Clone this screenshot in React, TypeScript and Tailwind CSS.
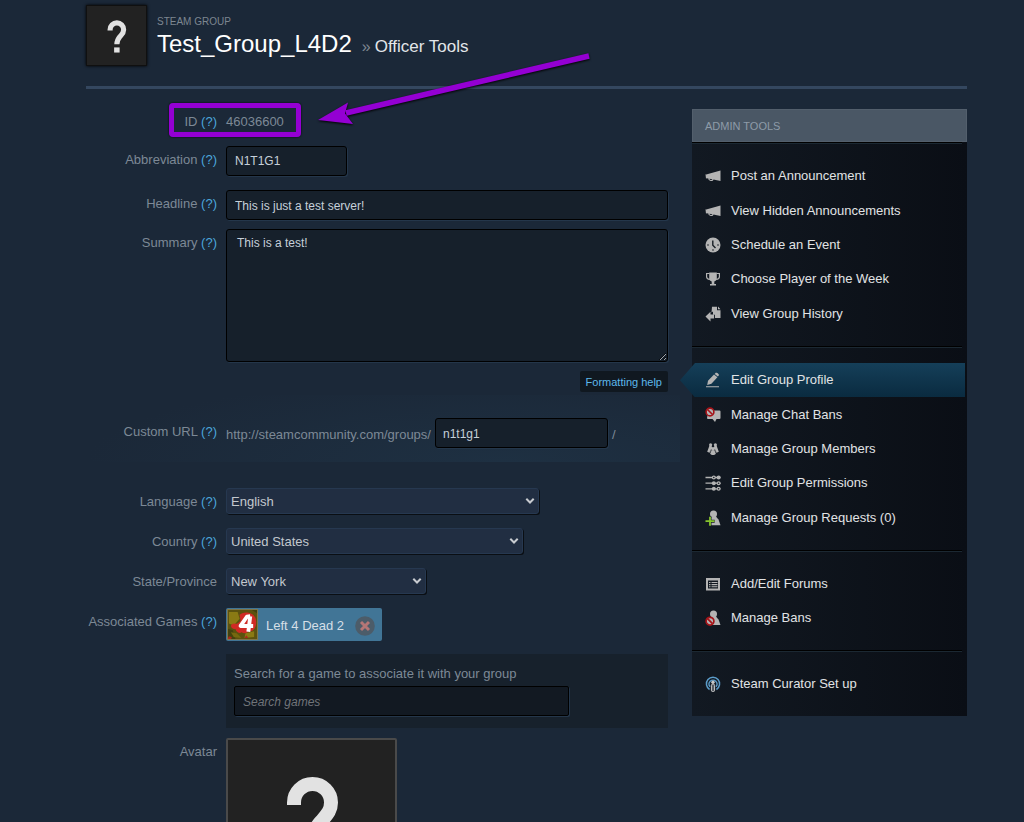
import type { ReactNode } from "react";

interface FieldProps {
    label: string;
    htmlFor?: string;
    help?: boolean;
    className?: string;
    children: ReactNode;
}

interface SelectProps {
    id: string;
    value: string;
    width: string;
}

interface AdminItem {
    label: string;
    icon: ReactNode;
    active?: boolean;
}

const inputStyle =
    "block rounded-[3px] border border-black bg-[#16202b] text-[12px] text-[#c6d0da] shadow-[1px_1px_0_#24364a] outline-none";

const HelpLink = () => (
    <a href="#help" className="text-[#4ba6dc]">(?)</a>
);

// One form row: right-aligned label, then the control
const Field = ({ label, htmlFor, help = true, className = "", children }: FieldProps) => (
    <div className={`grid grid-cols-[131px_minmax(0,1fr)] gap-x-[9px] ${className}`}>
        <div className="pt-[5px] text-right whitespace-nowrap">
            {htmlFor ? <label htmlFor={htmlFor}>{label}</label> : <span>{label}</span>}
            {help && <> <HelpLink /></>}
        </div>
        <div>{children}</div>
    </div>
);

const SelectBox = ({ id, value, width }: SelectProps) => (
    <div className={`relative ${width}`}>
        <select
            id={id}
            defaultValue={value}
            className="block h-[26px] w-full appearance-none rounded-[3px] border border-[#263850] bg-[#212e42] pt-px pl-1 text-[13px] text-[#c3c8ce] shadow-[1px_1px_0_#0a0e13] outline-none"
        >
            <option>{value}</option>
        </select>
        <svg viewBox="0 0 10 8" className="pointer-events-none absolute top-[9px] right-1 h-2 w-[10px]">
            <path d="M1.3 1.8 5 5.5 8.7 1.8" fill="none" stroke="#c8cbd0" strokeWidth="2" />
        </svg>
    </div>
);

// Default group avatar
const QuestionMark = ({ viewBox, className }: { viewBox: string; className: string }) => (
    <svg viewBox={viewBox} className={className}>
        <path
            d="M68 67v-2.5a18.5 18.5 0 0 1 37 0c0 9-5 13-10 19s-8.5 10-8.5 21"
            fill="none"
            stroke="#e2e2e2"
            strokeWidth="14"
        />
        <rect x="79" y="113" width="15" height="14" fill="#e2e2e2" />
    </svg>
);

const Icon = ({ children }: { children: ReactNode }) => (
    <svg viewBox="0 0 16 16" className="h-4 w-4 shrink-0" fill="#b4b4b4">
        {children}
    </svg>
);

const megaphone = (
    <Icon>
        <path d="M15.5 2.5v10.600L8.500 11.500c-.4 1.500-2 1.800-3.400 1.300-1.300-.4-1.900-1.200-1.700-2.200L1.500 10.300 1 10.800.5 6.200l.7.4zM4.500 10.800c0 .7.500 1 1.200 1.200.8.200 1.500 0 1.800-.7z" />
    </Icon>
);

const clock = (
    <Icon>
        <circle cx="8" cy="8" r="7.5" />
        <path d="M7.800 3.500v4.800l2.700 2.700" fill="none" stroke="#171d24" strokeWidth="1.4" />
        <g fill="#171d24">
            <circle cx="3" cy="8" r=".8" />
            <circle cx="13" cy="8" r=".8" />
            <circle cx="8" cy="13" r=".8" />
        </g>
    </Icon>
);

const trophy = (
    <Icon>
        <path d="M4.200 1.500h7.600v6c0 1.700-1.300 2.600-2.500 3V13H11v1.500H5V13h1.700v-2.500c-1.200-.4-2.500-1.300-2.500-3z" />
        <path d="M4.500 2.500H1.600v3.300c0 1.700 1.200 2.500 3.200 2.500M11.500 2.500h2.900v3.300c0 1.700-1.200 2.500-3.200 2.500" fill="none" stroke="#b4b4b4" strokeWidth="1.2" />
    </Icon>
);

const history = (
    <Icon>
        <path d="M7 .8h5v3.500h3.500V12H10V8.700H8V5.500L6.500 6.500zM13 .6l2.500 2.700H13z" />
        <path d="M.5 10.500 5.500 5.800v2.800h3.600v4H5.500v2.800z" />
    </Icon>
);

const pencil = (
    <Icon>
        <path d="m2.200 13 .8-4.200 6-6.400 3.400 2.800-6 6.600zM9.700 1.900l1-1.100c.9-.8 3.900 1.400 3.200 2.500l-1 1.300z" />
        <path d="M1 14.700h13" fill="none" stroke="#b4b4b4" strokeWidth="1.1" />
    </Icon>
);

const chatBan = (
    <Icon>
        <path d="M3.500 3.500h11a1 1 0 0 1 1 1v6.500a1 1 0 0 1-1 1H11.500L10 15l-2.500-3H3a1 1 0 0 1-1-1z" />
        <circle cx="5" cy="5" r="3.900" fill="#b4b4b4" stroke="#a51318" strokeWidth="1.6" />
        <path d="m2.500 2.500 5 5" stroke="#a51318" strokeWidth="1.6" />
    </Icon>
);

const members = (
    <Icon>
        <circle cx="5.600" cy="3.800" r="1.600" />
        <circle cx="10.400" cy="3.800" r="1.600" />
        <path d="M4.300 5h2.300l.8 2.500L5 12l-2.800-1.200zM11.700 5H9.400l-.8 2.500L11 12l2.800-1.200z" />
        <circle cx="8" cy="8" r="1.900" />
        <path d="M6.500 9.500h3l1.400 3.300c-1.300 1.700-4.500 1.700-5.800 0z" />
        <path d="M6.300 8.300 4.700 12M9.700 8.300l1.600 3.700" stroke="#171d24" strokeWidth=".6" />
    </Icon>
);

const permissions = (
    <Icon>
        <path d="M.5 2.500h15M.5 8.200h15M.5 13.900h15" stroke="#b4b4b4" strokeWidth="1.3" />
        <circle cx="8.800" cy="2.500" r="2" />
        <circle cx="13.600" cy="2.500" r="2" />
        <circle cx="8.800" cy="8.200" r="2" />
        <circle cx="13.600" cy="8.200" r="2" />
        <circle cx="8.800" cy="13.800" r="2" />
        <circle cx="13.600" cy="13.800" r="2" />
        <g fill="#171d24">
            <circle cx="8.800" cy="2.500" r=".8" />
            <circle cx="13.600" cy="8.200" r=".8" />
            <circle cx="13.600" cy="13.800" r=".8" />
        </g>
    </Icon>
);

const requests = (
    <Icon>
        <circle cx="8.500" cy="4" r="3.500" />
        <path d="M7 6h3.500l3 3.500 2 5.800H5V10z" />
        <path d="M5 6.500v9.400M.3 11.200h9.400" stroke="#171d24" strokeWidth="3" />
        <path d="M5 6.700v9M.5 11.200H9.500" stroke="#86c52d" strokeWidth="1.8" />
    </Icon>
);

const forums = (
    <Icon>
        <path fillRule="evenodd" d="M1 2h14v12.500H1zm2 2.600v8h10v-8z" />
        <path d="M4 6.500h1.500M4 8.600h1.500M4 10.700h1.500M6.500 6.500h6M6.500 8.600h6M6.500 10.700h6" stroke="#b4b4b4" strokeWidth="1.1" />
    </Icon>
);

const bans = (
    <Icon>
        <circle cx="8.500" cy="4" r="3.500" />
        <path d="M7 6h3.500l3 3.500 2 5.500H5V9z" />
        <circle cx="5" cy="11.200" r="3.900" fill="#b4b4b4" stroke="#a51318" strokeWidth="1.7" />
        <path d="m2.500 8.700 5 5" stroke="#a51318" strokeWidth="1.7" />
    </Icon>
);

const curator = (
    <Icon>
        <g fill="none" stroke="#5b9cc9" strokeWidth="1.5">
            <path d="M4.600 13.500a6.600 6.600 0 1 1 6.800 0" />
            <path d="M5 10.800a4 4 0 1 1 6 0" />
        </g>
        <circle cx="8" cy="6.200" r="1.700" fill="#c9c9c9" />
        <rect x="6.400" y="8.200" width="3.200" height="7.300" rx="1.200" fill="#555b62" stroke="#c9c9c9" />
    </Icon>
);

const groups: { height: string; items: AdminItem[] }[] = [
    {
        height: "h-[172px]",
        items: [
            { label: "Post an Announcement", icon: megaphone },
            { label: "View Hidden Announcements", icon: megaphone },
            { label: "Schedule an Event", icon: clock },
            { label: "Choose Player of the Week", icon: trophy },
            { label: "View Group History", icon: history },
        ],
    },
    {
        height: "h-[172px]",
        items: [
            { label: "Edit Group Profile", icon: pencil, active: true },
            { label: "Manage Chat Bans", icon: chatBan },
            { label: "Manage Group Members", icon: members },
            { label: "Edit Group Permissions", icon: permissions },
            { label: "Manage Group Requests (0)", icon: requests },
        ],
    },
    {
        height: "h-[68px]",
        items: [
            { label: "Add/Edit Forums", icon: forums },
            { label: "Manage Bans", icon: bans },
        ],
    },
    {
        height: "h-[34px]",
        items: [{ label: "Steam Curator Set up", icon: curator }],
    },
];

const AdminTools = () => (
    <nav className="w-[275px] shrink-0 bg-linear-to-r from-[#121922] to-[#0a0e15]">
        <h2 className="flex h-[33px] items-center border border-[#535f6c] bg-[#4a5765] px-3 text-[11px] text-[#8e9ba8]">
            ADMIN TOOLS
        </h2>
        {groups.map((group) => (
            <div
                key={group.items[0].label}
                className="mr-[5px] border-t border-black pt-4 pb-[15px] shadow-[inset_0_1px_0_#1b2832]"
            >
                <ul className={`grid auto-rows-fr ${group.height}`}>
                    {group.items.map((item) => (
                        <li key={item.label} className="grid">
                            <a
                                href="#tools"
                                className={
                                    item.active
                                        ? "-mr-[3px] -ml-[12px] flex items-center gap-[10px] bg-linear-to-b from-[#153f59] to-[#0a2b40] pl-[25px] text-[#e1e3e5] [clip-path:polygon(15px_0,100%_0,100%_100%,15px_100%,0_50%)]"
                                        : "flex items-center gap-[10px] pl-[13px] text-[#e1e3e5]"
                                }
                            >
                                {item.icon}
                                {item.label}
                            </a>
                        </li>
                    ))}
                </ul>
            </div>
        ))}
    </nav>
);

const GameBadge = () => (
    <div className="flex h-[33px] w-fit items-center rounded-[2px] bg-[#417596] pr-[7px] pl-px text-[#d5dfe6]">
        <svg viewBox="0 0 32 32" className="h-[31px] w-[31px]">
            <rect width="32" height="32" fill="#5c520f" />
            <path d="M2 3h9l2 7-6 7-5-2zM19 25l9-2v6l-10 1z" fill="#8a7a14" />
            <path d="M0 20l6 2 3 10H0zM24 0h8v5z" fill="#43420f" />
            <path d="M4 24l6 1 5 5-8-1z" fill="#75680f" />
            <path d="M13 6c3-4 16-4 17 6 1 7-3 12-8 11-2 3-5 2-7 1-3 2-6-1-6-3-5 0-7-5-2-6 3 1 5-1 7-3z" fill="#d02a24" />
            <path d="M2 28l3 1-1 3H0zM20 27l2 3h-4z" fill="#a82a1c" />
            <path d="M24 7.500 20.500 8 14 17.500H27M24 7.500 22 23.500" fill="none" stroke="#fff" strokeWidth="4" strokeLinejoin="round" />
            <rect x=".5" y=".5" width="31" height="31" fill="none" stroke="#80774c" />
        </svg>
        <span className="pt-[3px] pl-2">Left 4 Dead 2</span>
        <button type="button" aria-label="Remove Left 4 Dead 2" className="ml-[11px] pt-[3px]">
            <svg viewBox="0 0 20 20" className="block h-5 w-5">
                <circle cx="10" cy="10" r="9.800" fill="#4c5c69" />
                <path d="m6 6 8 8M14 6l-8 8" stroke="#b47676" strokeWidth="3" />
            </svg>
        </button>
    </div>
);

export default function App() {
    return (
        <div className="relative h-screen overflow-hidden bg-[#1b2838] pr-[57px] pl-[86px] font-['Liberation_Sans',Arial,sans-serif] text-[13px] leading-[18px] text-[#7d8996]">
            <header className="flex h-[89px] border-b-[3px] border-[#34475f] pt-[5px]">
                <div className="h-[61px] w-[61px] shrink-0 border border-[#101010] bg-[#222] shadow-[0_0_3px_#000]">
                    <QuestionMark viewBox="5 0 161 161" className="h-full w-full" />
                </div>
                <div className="pt-[11px] pl-[10px]">
                    <div className="text-[10px] leading-3 text-[#7d8690]">STEAM GROUP</div>
                    <h1 className="flex items-baseline text-[24px] leading-8 text-white">
                        <a href="#group">Test_Group_L4D2</a>
                        <span className="ml-[10px] text-[16px] text-[#7d8690]">»</span>
                        <span className="ml-1 text-[17px] text-[#e3e6e9]">Officer Tools</span>
                    </h1>
                </div>
            </header>

            <div className="flex justify-between gap-6">
                <form className="min-w-0 flex-1 pt-[14px]">
                    <Field label="ID" className="pt-[5px]">
                        <div className="relative h-[38px] pt-[5px]">
                            46036600
                            <div className="absolute top-[-5px] left-[-57px] h-[34px] w-[132px] rounded-[4px] border-[5px] border-[#9400d3] shadow-[0_0_2px_#000]" />
                        </div>
                    </Field>
                    <Field label="Abbreviation" htmlFor="abbreviation">
                        <input id="abbreviation" defaultValue="N1T1G1" className={`${inputStyle} h-[30px] w-[121px] px-2`} />
                    </Field>
                    <Field label="Headline" htmlFor="headline" className="mt-[14px]">
                        <input id="headline" defaultValue="This is just a test server!" className={`${inputStyle} h-[30px] w-full px-2 pt-px`} />
                    </Field>
                    <Field label="Summary" htmlFor="summary" className="mt-[9px]">
                        <textarea
                            id="summary"
                            defaultValue="This is a test!"
                            className={`${inputStyle} h-[133px] w-full px-[10px] py-1`}
                        />
                        <div className="mt-[9px] flex justify-end">
                            <button type="button" className="h-[21px] rounded-[2px] bg-[#101820] px-[6px] text-[11px] text-[#5eb8ec]">
                                Formatting help
                            </button>
                        </div>
                    </Field>
                    <Field
                        label="Custom URL"
                        htmlFor="custom-url"
                        className="mt-[3px] -mr-3 bg-[radial-gradient(ellipse_70%_130%_at_70%_100%,#1e3042,#1b2838)] pt-[23px] pb-[14px]"
                    >
                        <div className="flex items-center gap-[4px]">
                            <span className="pt-[3px]">http://steamcommunity.com/groups/</span>
                            <input id="custom-url" defaultValue="n1t1g1" className={`${inputStyle} h-[30px] w-[173px] px-[7px] pt-px`} />
                            <span className="pt-[3px]">/</span>
                        </div>
                    </Field>
                    <div className="mt-[26px] grid gap-[14px]">
                        <Field label="Language" htmlFor="language">
                            <SelectBox id="language" value="English" width="w-[313px]" />
                        </Field>
                        <Field label="Country" htmlFor="country">
                            <SelectBox id="country" value="United States" width="w-[297px]" />
                        </Field>
                        <Field label="State/Province" htmlFor="state" help={false}>
                            <SelectBox id="state" value="New York" width="w-[200px]" />
                        </Field>
                        <Field label="Associated Games">
                            <GameBadge />
                            <div className="mt-[13px] bg-[#17212c] px-2 pt-[11px] pb-3">
                                <label htmlFor="search-games">Search for a game to associate it with your group</label>
                                <input
                                    id="search-games"
                                    placeholder="Search games"
                                    className="mt-[3px] block h-[30px] w-[335px] rounded-[2px] border border-black bg-[#121922] px-2 pt-px text-[12px] italic shadow-[1px_1px_0_#24364a] outline-none placeholder:text-[#707479]"
                                />
                            </div>
                        </Field>
                    </div>
                    <Field label="Avatar" help={false} className="mt-[10px]">
                        <div className="h-[171px] w-[171px] rounded-[2px] border-2 border-[#4a4a4a] bg-[#222]">
                            <QuestionMark viewBox="2 2 167 167" className="h-full w-full" />
                        </div>
                    </Field>
                </form>

                <div className="pt-5">
                    <AdminTools />
                </div>
            </div>

            {/* Pointer to the group ID */}
            <svg
                viewBox="0 0 280 80"
                className="pointer-events-none absolute top-[50px] left-[314px] h-20 w-[280px] drop-shadow-[0_1px_1px_#000]"
                fill="#9400d3"
            >
                <path d="M275 6 32 63" stroke="#9400d3" strokeWidth="5.5" />
                <path d="M4 70 34 52.500 31 63.500 39 74z" />
            </svg>
        </div>
    );
}
